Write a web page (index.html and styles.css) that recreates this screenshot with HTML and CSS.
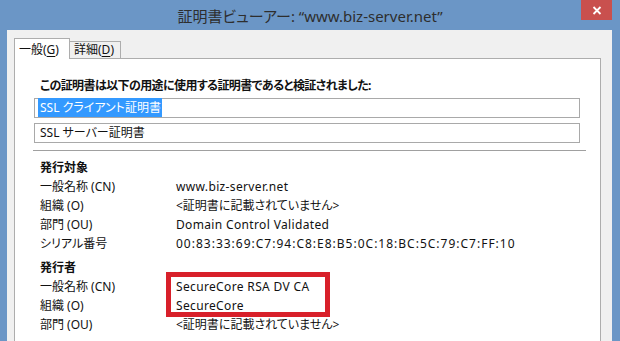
FILE: index.html
```html
<!DOCTYPE html>
<html lang="ja">
<head>
<meta charset="utf-8">
<title>証明書ビューアー</title>
<link rel="stylesheet" href="styles.css">
</head>
<body>
<div class="window">
  <div class="titlebar">
    <span></span>
    <div class="title">証明書ビューアー: “www.biz-server.net”</div>
    <div class="close"><svg width="10" height="9" viewBox="0 0 10 9"><path d="M1.5 1 L8.5 8 M8.5 1 L1.5 8" stroke="#fff" stroke-width="1.8" fill="none"/></svg></div>
  </div>
  <div class="client">
    <div class="tabs">
      <div class="tab active">一般(<u>G</u>)</div>
      <div class="tab">詳細(<u>D</u>)</div>
    </div>
    <div class="panel">
      <div class="heading">この証明書は以下の用途に使用する証明書であると検証されました:</div>
      <div class="box"><span class="sel">SSL クライアント証明書</span></div>
      <div class="box">SSL サーバー証明書</div>
      <div class="sep"></div>
      <section class="group">
        <div class="group-title">発行対象</div>
        <dl class="fields">
          <dt>一般名称 (CN)</dt><dd class="latin">www.biz-server.net</dd>
          <dt>組織 (O)</dt><dd>&lt;証明書に記載されていません&gt;</dd>
          <dt>部門 (OU)</dt><dd class="latin">Domain Control Validated</dd>
          <dt>シリアル番号</dt><dd class="serial">00:83:33:69:C7:94:C8:E8:B5:0C:18:BC:5C:79:C7:FF:10</dd>
        </dl>
      </section>
      <section class="group issuer">
        <div class="group-title">発行者</div>
        <dl class="fields">
          <dt>一般名称 (CN)</dt><dd class="latin">SecureCore RSA DV CA</dd>
          <dt>組織 (O)</dt><dd class="latin">SecureCore</dd>
          <dt>部門 (OU)</dt><dd>&lt;証明書に記載されていません&gt;</dd>
          <div class="mark"></div>
        </dl>
      </section>
    </div>
  </div>
</div>
</body>
</html>
```
FILE: styles.css
```css
html, body {
  margin: 0;
  padding: 0;
  height: 100%;
  overflow: hidden;
}
body {
  background: #6b96c6;
  font-family: "Noto Sans", "Noto Sans CJK JP", sans-serif;
  font-size: 12px;
  color: #111;
  font-feature-settings: "palt";
}
.window {
  height: 341px;
  display: flex;
  flex-direction: column;
}
.titlebar {
  height: 30px;
  flex: none;
  display: grid;
  grid-template-columns: 1fr auto 1fr;
  align-items: start;
}
.title {
  font-size: 15px;
  line-height: 32px;
  color: #2e2e2e;
  white-space: nowrap;
}
.close {
  justify-self: end;
  margin-right: 8px;
  width: 31px;
  height: 20px;
  background: #c9504e;
  display: flex;
  align-items: center;
  justify-content: center;
}
.client {
  flex: 1;
  margin: 0 8px 0 7px;
  background: #f0f0f0;
  padding: 8px 11px 0 7px;
  display: flex;
  flex-direction: column;
}
.tabs {
  display: flex;
  align-items: flex-end;
  height: 20px;
  position: relative;
  z-index: 1;
}
.tab {
  height: 16px;
  line-height: 16px;
  padding: 0 4px;
  border: 1px solid #adadad;
  border-bottom: none;
  background: #f0f0f0;
  color: #111;
}
.tab.active {
  height: 20px;
  line-height: 21px;
  width: 46px;
  background: #fff;
  margin-bottom: -1px;
}
.tab + .tab {
  border-left: none;
  width: 42px;
}
.tab u {
  text-underline-offset: 2px;
}
.panel {
  flex: 1;
  background: #fff;
  border: 1px solid #adadad;
  border-bottom: none;
  padding: 19px 20px 0 19px;
}
.heading {
  font-weight: bold;
  line-height: 16px;
  padding-left: 6px;
  white-space: nowrap;
  letter-spacing: -0.6px;
}
.box {
  height: 18px;
  line-height: 18px;
  border: 1px solid #a9a9a9;
  padding-left: 5px;
  margin-top: 4px;
}
.box + .box {
  margin-top: 5px;
}
.sel {
  background: #3399ff;
  color: #fff;
  padding: 1px 1px 1px 2px;
  margin-left: -2px;
}
.sep {
  height: 1px;
  background: #a0a0a0;
  margin: 7px -6px 0 -1px;
}
.group {
  padding-left: 6px;
  margin-top: 7px;
}
.group.issuer {
  margin-top: 5px;
}
.group-title {
  font-weight: bold;
  line-height: 19px;
}
.fields {
  margin: 0;
  display: grid;
  grid-template-columns: 136px 1fr;
  line-height: 19px;
  position: relative;
}
.fields dt, .fields dd {
  margin: 0;
  white-space: nowrap;
}
.latin {
  letter-spacing: 0.35px;
}
.serial {
  letter-spacing: 1px;
}
.mark {
  position: absolute;
  left: 126px;
  top: -5px;
  width: 154px;
  height: 35px;
  border: 5px solid #d8202a;
}
```
